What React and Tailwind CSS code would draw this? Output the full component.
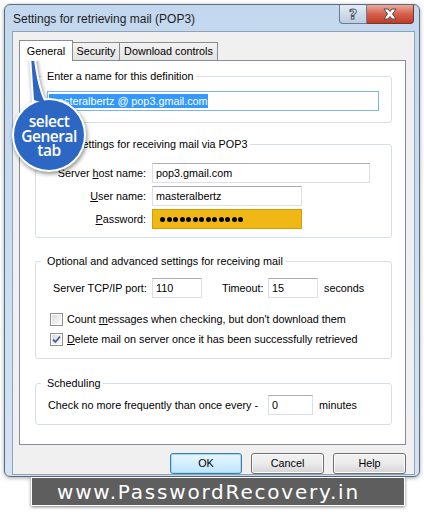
import React from 'react';

const inputCls =
  'h-[20px] bg-white border border-[#dbdfe6] border-t-[#abadb3] flex items-center pl-[3px] text-[10.8px] leading-none';

const Field = ({ w, children, className = '' }) => (
  <div className={`${inputCls} ${w} ${className}`}>{children}</div>
);

const Group = ({ title, h, children }) => (
  <fieldset className={`w-[357px] ${h} border border-[#d5dfe5] rounded-[3px] px-[5px] pb-0 pt-0`}>
    <legend className="pl-[6px] pr-[3px] text-[10.8px] leading-[14px]">{title}</legend>
    {children}
  </fieldset>
);

const CheckBox = ({ checked }) => (
  <div className="w-[13px] h-[13px] border border-[#8e8f8f] bg-white p-px">
    <div className="w-full h-full bg-gradient-to-br from-[#dcdcdc] to-[#fbfbfb] flex items-center justify-center">
      {checked && (
        <svg width="9" height="9" viewBox="0 0 9 9">
          <path d="M1 4.5 L3.5 7 L8 1.5" fill="none" stroke="#4a5f94" strokeWidth="1.8" />
        </svg>
      )}
    </div>
  </div>
);

const WinButton = ({ children, primary }) => (
  <button
    className={
      primary
        ? 'w-[72px] h-[21px] rounded-[3px] border border-[#3c7fb1] bg-gradient-to-b from-[#eaf6fd] to-[#bee6fd] text-[10.8px] shadow-[inset_0_0_0_1px_#a5d6f3]'
        : 'w-[73px] h-[21px] rounded-[3px] border border-[#707070] bg-gradient-to-b from-[#f2f2f2] via-[#ebebeb] to-[#d4d4d4] text-[10.8px] shadow-[inset_0_0_0_1px_#fcfcfc]'
    }
  >
    {children}
  </button>
);

const Callout = () => (
  <div className="absolute left-0 top-0 w-[100px] h-[180px]">
    <svg width="100" height="180" viewBox="0 0 100 180" className="absolute left-0 top-0 drop-shadow-[1px_2px_2px_rgba(0,0,0,0.45)]">
      <g stroke="#ffffff" strokeWidth="4" fill="#ffffff">
        <path d="M31 56 L34 100 L46 104 Q38 92 33.5 56 Z" />
        <circle cx="49" cy="135" r="35" />
      </g>
      <g fill="#2c67c3">
        <path d="M31 56 L34 100 L46 104 Q38 92 33.5 56 Z" />
        <circle cx="49" cy="135" r="35" />
      </g>
    </svg>
    <div className="absolute left-[15px] top-[114px] w-[68px] flex flex-col items-center text-white font-['Open_Sans',sans-serif] font-semibold text-[15.5px] leading-[14.5px] tracking-[-0.5px]">
      <span>select</span>
      <span>General</span>
      <span>tab</span>
    </div>
  </div>
);

export default function App() {
  return (
    <div className="relative w-[424px] h-[512px] bg-white overflow-hidden font-['Liberation_Sans',Arial,sans-serif] text-black">
      <div className="pt-[4px] pl-[4px]">
        <div className="w-[416px] h-[473px] rounded-[6px] border border-[#5b6b7d] bg-gradient-to-b from-[#c3d8ee] via-[#cadcf0] to-[#d3e3f4] shadow-[0_1px_4px_rgba(0,0,0,0.35)] flex flex-col">
          {/* title bar */}
          <div className="h-[27px] flex justify-between">
            <span className="pl-[8px] pt-[6px] text-[12px] leading-[16px] text-[#1e1e1e]">
              Settings for retrieving mail (POP3)
            </span>
            <div className="flex mr-[5px] h-[19px]">
              <div className="w-[28px] h-[19px] rounded-bl-[4px] border border-t-0 border-[#6b7c90] bg-gradient-to-b from-[#e4ecf6] to-[#bccde2] flex items-center justify-center">
                <span className="text-[14px] font-bold leading-none text-white [-webkit-text-stroke:1px_#4a5565] font-['DejaVu_Sans',sans-serif]">?</span>
              </div>
              <div className="w-[47px] h-[19px] rounded-br-[4px] border border-l-0 border-t-0 border-[#6e3a34] bg-gradient-to-b from-[#e9a99a] via-[#d4614c] to-[#c13a22] flex items-center justify-center">
                <svg width="16" height="12" viewBox="0 0 16 12">
                  <path
                    d="M2 1 H6 L8 3.5 L10 1 H14 L10.5 6 L14 11 H10 L8 8.5 L6 11 H2 L5.5 6 Z"
                    fill="#ffffff"
                    stroke="#4a4a4a"
                    strokeWidth="1"
                    strokeLinejoin="round"
                  />
                </svg>
              </div>
            </div>
          </div>

          {/* client area */}
          <div className="ml-[7px] w-[403px] flex-1 mb-[1px] border border-[#8fa3b8] bg-[#f0f0f0] pl-[6px] pt-[8px]">
            {/* tabs */}
            <div className="flex items-end h-[21px] -mb-px relative z-10">
              <div className="w-[54px] h-[21px] bg-white border border-b-0 border-[#898c95] flex items-center justify-center text-[10.8px] pt-[1px]">
                General
              </div>
              <div className="-ml-px w-[48px] h-[18px] mb-px bg-gradient-to-b from-[#f2f2f2] to-[#e3e3e3] border border-b-0 border-[#898c95] flex items-center justify-center text-[10.8px]">
                Security
              </div>
              <div className="-ml-px w-[99px] h-[18px] mb-px bg-gradient-to-b from-[#f2f2f2] to-[#e3e3e3] border border-b-0 border-[#898c95] flex items-center justify-center text-[10.8px]">
                Download controls
              </div>
            </div>

            {/* tab page */}
            <div className="w-[387px] h-[385px] bg-white border border-[#898c95] pl-[15px] pt-[8px] flex flex-col">
              <Group title="Enter a name for this definition" h="h-[54px]">
                <div className="mt-[8px] ml-[6px] w-[332px] h-[20px] border border-[#7eb4ea] bg-white flex items-center pl-px">
                  <span className="bg-[#3399ff] text-white text-[10.8px] leading-[14px]">masteralbertz @ pop3.gmail.com</span>
                </div>
              </Group>

              <div className="mt-[14px]">
                <Group title="Email settings for receiving mail via POP3" h="h-[101px]">
                  <div className="mt-[12px] flex flex-col gap-[3px] text-[10.8px]">
                    <div className="flex items-center">
                      <span className="w-[105px] text-right">
                        Server <u>h</u>ost name:
                      </span>
                      <Field w="w-[218px]" className="ml-[6px]">pop3.gmail.com</Field>
                    </div>
                    <div className="flex items-center">
                      <span className="w-[105px] text-right">
                        <u>U</u>ser name:
                      </span>
                      <Field w="w-[150px]" className="ml-[6px]">masteralbertz</Field>
                    </div>
                    <div className="flex items-center">
                      <span className="w-[105px] text-right">
                        <u>P</u>assword:
                      </span>
                      <div className="ml-[6px] w-[150px] h-[20px] bg-[#f0b814] border border-[#d39c08] flex items-center pl-[7px] gap-[1.5px]">
                        {Array.from({ length: 13 }).map((_, i) => (
                          <span key={i} className="w-[5px] h-[5px] rounded-full bg-black" />
                        ))}
                      </div>
                    </div>
                  </div>
                </Group>
              </div>

              <div className="mt-[16px]">
                <Group title="Optional and advanced settings for receiving mail" h="h-[105px]">
                  <div className="mt-[10px] ml-[12px] flex items-center text-[10.8px]">
                    <span className="w-[99px]">Server TCP/IP port:</span>
                    <Field w="w-[50px]">110</Field>
                    <span className="ml-[20px] w-[46px]">Timeout:</span>
                    <Field w="w-[50px]">15</Field>
                    <span className="ml-[6px]">seconds</span>
                  </div>
                  <div className="mt-[15px] ml-[9px] flex items-center gap-[4px] text-[10.8px] h-[13px]">
                    <CheckBox />
                    <span>
                      Count <u>m</u>essages when checking, but don't download them
                    </span>
                  </div>
                  <div className="mt-[7px] ml-[9px] flex items-center gap-[4px] text-[10.8px] h-[13px]">
                    <CheckBox checked />
                    <span>
                      <u>D</u>elete mail on server once it has been successfully retrieved
                    </span>
                  </div>
                </Group>
              </div>

              <div className="mt-[17px]">
                <Group title="Scheduling" h="h-[49px]">
                  <div className="mt-[5px] ml-[7px] flex items-center text-[10.8px]">
                    <span className="w-[220px]">Check no more frequently than once every -</span>
                    <Field w="w-[45px]">0</Field>
                    <span className="ml-[6px]">minutes</span>
                  </div>
                </Group>
              </div>
            </div>

            {/* buttons */}
            <div className="w-[387px] mt-[8px] flex justify-end gap-[9px]">
              <WinButton primary>OK</WinButton>
              <WinButton>Cancel</WinButton>
              <WinButton>Help</WinButton>
            </div>
          </div>
        </div>
      </div>

      {/* watermark */}
      <div className="ml-[31px] w-[374px] h-[29px] bg-[#5e5e5e] border border-white shadow-[0_1px_3px_rgba(0,0,0,0.5)] flex items-center pl-[25px]">
        <span className="text-white text-[20px] leading-none tracking-[1.8px] font-['DejaVu_Sans',sans-serif]">
          www.PasswordRecovery.in
        </span>
      </div>

      <Callout />
    </div>
  );
}
